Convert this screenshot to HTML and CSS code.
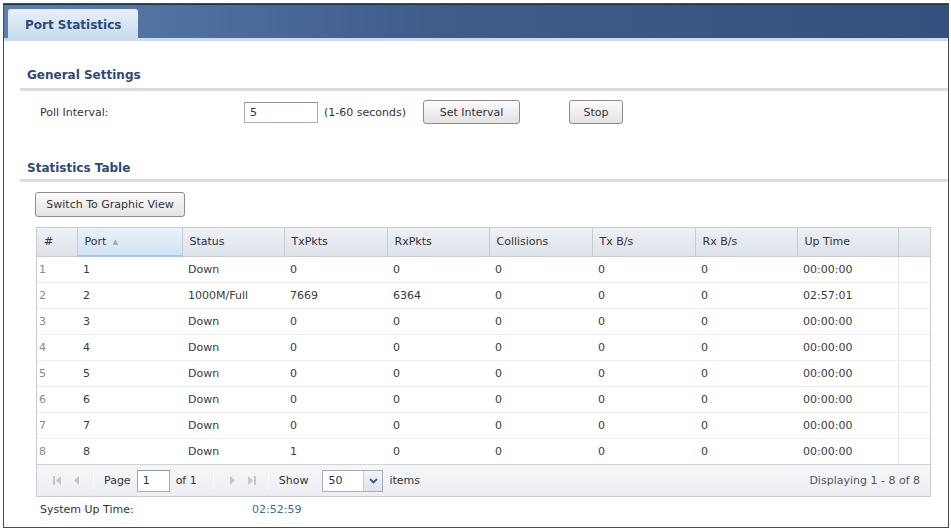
FILE: index.html
```html
<!DOCTYPE html>
<html lang="en">
<head>
   <meta charset="UTF-8">
   <title>Port Statistics</title>
   <link rel="stylesheet" href="styles.css">
</head>
<body>
   <div class="frame">
       <div class="tabbar">
           <div class="tab">Port Statistics</div>
       </div>

       <div class="content">
           <div class="section-title">General Settings</div>
           <div class="poll-row">
               <span class="poll-label">Poll Interval:</span>
               <input class="text-input poll-input" type="text" value="5">
               <span class="hint">(1-60 seconds)</span>
               <button class="btn btn-set">Set Interval</button>
               <button class="btn btn-stop">Stop</button>
           </div>

           <div class="section-title section-stats">Statistics Table</div>
           <button class="btn btn-switch">Switch To Graphic View</button>

           <div class="grid">
               <table>
                   <colgroup>
                       <col style="width: 40px">
                       <col style="width: 105px">
                       <col style="width: 102px">
                       <col style="width: 103px">
                       <col style="width: 102px">
                       <col style="width: 103px">
                       <col style="width: 103px">
                       <col style="width: 102px">
                       <col style="width: 101px">
                       <col>
                   </colgroup>
                   <thead>
                       <tr>
                           <th class="col-num">#</th>
                           <th class="sorted">Port <span class="sort-arrow">&#9650;</span></th>
                           <th>Status</th>
                           <th>TxPkts</th>
                           <th>RxPkts</th>
                           <th>Collisions</th>
                           <th>Tx B/s</th>
                           <th>Rx B/s</th>
                           <th>Up Time</th>
                           <th class="filler"></th>
                       </tr>
                   </thead>
                   <tbody>
                       <tr><td class="col-num">1</td><td>1</td><td>Down</td><td>0</td><td>0</td><td>0</td><td>0</td><td>0</td><td>00:00:00</td><td class="filler"></td></tr>
                       <tr><td class="col-num">2</td><td>2</td><td>1000M/Full</td><td>7669</td><td>6364</td><td>0</td><td>0</td><td>0</td><td>02:57:01</td><td class="filler"></td></tr>
                       <tr><td class="col-num">3</td><td>3</td><td>Down</td><td>0</td><td>0</td><td>0</td><td>0</td><td>0</td><td>00:00:00</td><td class="filler"></td></tr>
                       <tr><td class="col-num">4</td><td>4</td><td>Down</td><td>0</td><td>0</td><td>0</td><td>0</td><td>0</td><td>00:00:00</td><td class="filler"></td></tr>
                       <tr><td class="col-num">5</td><td>5</td><td>Down</td><td>0</td><td>0</td><td>0</td><td>0</td><td>0</td><td>00:00:00</td><td class="filler"></td></tr>
                       <tr><td class="col-num">6</td><td>6</td><td>Down</td><td>0</td><td>0</td><td>0</td><td>0</td><td>0</td><td>00:00:00</td><td class="filler"></td></tr>
                       <tr><td class="col-num">7</td><td>7</td><td>Down</td><td>0</td><td>0</td><td>0</td><td>0</td><td>0</td><td>00:00:00</td><td class="filler"></td></tr>
                       <tr><td class="col-num">8</td><td>8</td><td>Down</td><td>1</td><td>0</td><td>0</td><td>0</td><td>0</td><td>00:00:00</td><td class="filler"></td></tr>
                   </tbody>
               </table>

               <div class="pager">
                   <span class="pg-icon">
                       <svg width="10" height="11" viewBox="0 0 10 11"><rect x="1" y="1" width="2" height="9" fill="#c4c8cc"/><path d="M9 1 L4 5.5 L9 10 Z" fill="#c4c8cc"/></svg>
                   </span>
                   <span class="pg-icon">
                       <svg width="10" height="11" viewBox="0 0 10 11"><path d="M7 1 L2 5.5 L7 10 Z" fill="#c4c8cc"/></svg>
                   </span>
                   <span class="pg-sep"></span>
                   <span class="pg-text">Page</span>
                   <input class="text-input page-input" type="text" value="1">
                   <span class="pg-text">of 1</span>
                   <span class="pg-sep pg-sep-wide"></span>
                   <span class="pg-icon">
                       <svg width="10" height="11" viewBox="0 0 10 11"><path d="M3 1 L8 5.5 L3 10 Z" fill="#c4c8cc"/></svg>
                   </span>
                   <span class="pg-icon">
                       <svg width="10" height="11" viewBox="0 0 10 11"><path d="M1 1 L6 5.5 L1 10 Z" fill="#c4c8cc"/><rect x="7" y="1" width="2" height="9" fill="#c4c8cc"/></svg>
                   </span>
                   <span class="pg-sep"></span>
                   <span class="pg-text">Show</span>
                   <span class="select">
                       <span class="select-value">50</span>
                       <span class="select-btn">
                           <svg width="9" height="6" viewBox="0 0 9 6"><path d="M1 1 L4.5 4.5 L8 1" stroke="#3d5d8c" stroke-width="1.8" fill="none"/></svg>
                       </span>
                   </span>
                   <span class="pg-text">items</span>
                   <span class="pg-display">Displaying 1 - 8 of 8</span>
               </div>
           </div>

           <div class="uptime">
               <span class="uptime-label">System Up Time:</span>
               <span class="uptime-value">02:52:59</span>
           </div>
       </div>
   </div>
</body>
</html>
```

FILE: styles.css
```css
* {
    margin: 0;
    padding: 0;
    box-sizing: border-box;
}

body {
    font-family: "DejaVu Sans", Verdana, sans-serif;
    font-size: 11px;
    color: #333;
    background: #fff;
}

.frame {
    margin: 3px 2px 0 3px;
    height: 525px;
    border: 1px solid #4a4a4a;
    background: #fff;
}

.tabbar {
    height: 37px;
    padding: 4px 0 0 4px;
    background: linear-gradient(to right, #5a7fae, #3f5c8b 45%, #33507e);
    border-top: 1px solid #22334f;
    border-bottom: 3px solid #c9dbef;
}

.tab {
    width: 130px;
    height: 30px;
    padding: 9px 0 0 17px;
    border-radius: 3px 3px 0 0;
    background: linear-gradient(#e8f0f9, #c9dbef);
    color: #2b4a7c;
    font-size: 12px;
    font-weight: bold;
}

.content {
    padding-top: 27px;
}

.section-title {
    margin-left: 16px;
    padding: 0 0 6px 7px;
    line-height: 14px;
    border-bottom: 3px solid #dcdcdc;
    color: #2d4a78;
    font-size: 12px;
    font-weight: bold;
}

.section-stats {
    margin-top: 37px;
    padding-bottom: 4px;
}

.poll-row {
    display: flex;
    align-items: center;
    height: 24px;
    margin-top: 9px;
    padding-left: 36px;
}

.poll-label {
    width: 204px;
}

.text-input {
    height: 21px;
    border: 1px solid #a5acb5;
    border-top-color: #8c949e;
    padding: 0 5px;
    font-family: inherit;
    font-size: 11px;
    color: #333;
    background: #fff;
}

.poll-input {
    width: 74px;
}

.hint {
    margin-left: 6px;
}

.btn {
    height: 24px;
    border: 1px solid #8d8d8d;
    border-radius: 3px;
    background: linear-gradient(#fbfbfb, #e3e3e3);
    font-family: inherit;
    font-size: 11px;
    color: #333;
}

.btn-set {
    width: 97px;
    margin-left: 17px;
}

.btn-stop {
    width: 54px;
    margin-left: 49px;
}

.btn-switch {
    display: block;
    width: 150px;
    height: 25px;
    margin: 10px 0 0 31px;
}

.grid {
    width: 895px;
    margin: 10px 0 0 32px;
    border: 1px solid #cbcbcb;
}

table {
    width: 100%;
    border-collapse: collapse;
    table-layout: fixed;
}

th {
    height: 28px;
    padding-left: 7px;
    text-align: left;
    font-weight: normal;
    color: #333;
    background: linear-gradient(#eef1f5, #dde3ea);
    border-right: 1px solid #c6ccd4;
    border-bottom: 1px solid #c6ccd4;
}

th.sorted {
    background: linear-gradient(#e9f1fa, #d2e2f3);
    border-bottom: 2px solid #a7c5e8;
}

.sort-arrow {
    font-size: 7px;
    color: #9aa6b4;
    margin-left: 3px;
    vertical-align: 1px;
}

th.filler {
    border-right: none;
}

td {
    height: 26px;
    padding-left: 6px;
    border-bottom: 1px solid #ededed;
    color: #3a3a3a;
}

td.col-num {
    padding-left: 2px;
    color: #8a8a8a;
}

td.filler {
    border-left: 1px solid #e4e4e4;
}

tbody tr:last-child td {
    border-bottom: none;
}

.pager {
    display: flex;
    align-items: center;
    height: 32px;
    padding: 0 10px 0 10px;
    border-top: 1px solid #cfd3d8;
    background: linear-gradient(#f6f7f9, #eceef1);
}

.pg-icon {
    display: flex;
    width: 20px;
    justify-content: center;
}

.pg-sep {
    width: 1px;
    height: 16px;
    margin: 0 6px;
    background: #cfd3d8;
    border-right: 1px solid #fff;
}

.pg-sep-wide {
    margin: 0 8px 0 12px;
}

.pg-text {
    margin: 0 4px;
}

.page-input {
    width: 33px;
    height: 22px;
    margin: 0 2px;
}

.select {
    display: flex;
    width: 61px;
    height: 22px;
    margin: 0 2px 0 10px;
    border: 1px solid #a5acb5;
    background: #fff;
}

.select-value {
    flex: 1;
    padding: 3px 0 0 5px;
}

.select-btn {
    display: flex;
    align-items: center;
    justify-content: center;
    width: 19px;
    border-left: 1px solid #c5cbd2;
    background: linear-gradient(#f1f3f6, #dfe4ea);
}

.pg-display {
    margin-left: auto;
    color: #555;
}

.uptime {
    display: flex;
    margin-top: 6px;
    padding-left: 36px;
    line-height: 14px;
}

.uptime-label {
    width: 212px;
}

.uptime-value {
    color: #4b6a90;
}
```
